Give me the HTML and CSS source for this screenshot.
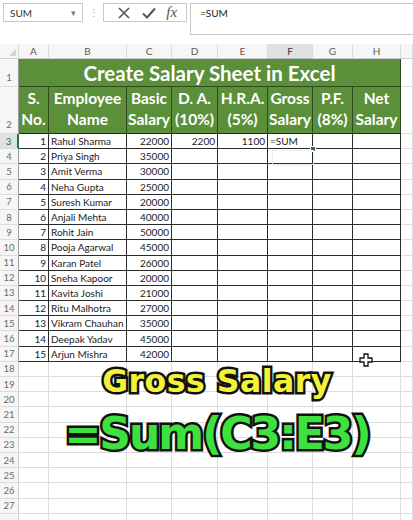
FILE: index.html
```html
<!DOCTYPE html>
<html>
<head>
<meta charset="utf-8">
<link rel="stylesheet" href="styles.css">
</head>
<body>
<div class="fbar">
  <div class="namebox"><span>SUM</span><span class="arrow">▾</span></div>
  <div class="dots">⋮</div>
  <div class="fxbox">
    <svg class="ic" width="14" height="14" viewBox="0 0 14 14"><path d="M2 2 L12 12 M12 2 L2 12" stroke="#555" stroke-width="1.6" fill="none"/></svg>
    <svg class="ic" width="16" height="14" viewBox="0 0 16 14"><path d="M2 7.5 L6 11.5 L14 2.5" stroke="#555" stroke-width="2" fill="none"/></svg>
    <span class="fx">fx</span>
  </div>
  <div class="finput">=SUM</div>
</div>
<div class="sheet">
  <div class="row hd">
    <div class="c corner"><span class="tri"></span></div>
    <div class="c ch">A</div><div class="c ch">B</div><div class="c ch">C</div><div class="c ch">D</div><div class="c ch">E</div><div class="c ch sel">F</div><div class="c ch">G</div><div class="c ch">H</div><div class="c ch"></div>
  </div>
  <div class="row r1">
    <div class="c rn dk bot">1</div>
    <div class="c title">Create Salary Sheet in Excel</div>
    <div class="c"></div>
  </div>
  <div class="row r2">
    <div class="c rn dk bot">2</div>
    <div class="c h">S.<br>No.</div><div class="c h">Employee<br>Name</div><div class="c h">Basic<br>Salary</div><div class="c h">D. A.<br>(10%)</div><div class="c h">H.R.A.<br>(5%)</div><div class="c h">Gross<br>Salary</div><div class="c h">P.F.<br>(8%)</div><div class="c h">Net<br>Salary</div>
    <div class="c"></div>
  </div>
  <div class="row d"><div class="c rn dk cur">3</div><div class="c b n">1</div><div class="c b">Rahul Sharma</div><div class="c b n">22000</div><div class="c b n">2200</div><div class="c b n">1100</div><div class="c b">=SUM</div><div class="c b"></div><div class="c b"></div><div class="c"></div></div>
  <div class="row d"><div class="c rn dk">4</div><div class="c b n">2</div><div class="c b">Priya Singh</div><div class="c b n">35000</div><div class="c b"></div><div class="c b"></div><div class="c b"></div><div class="c b"></div><div class="c b"></div><div class="c"></div></div>
  <div class="row d"><div class="c rn dk">5</div><div class="c b n">3</div><div class="c b">Amit Verma</div><div class="c b n">30000</div><div class="c b"></div><div class="c b"></div><div class="c b"></div><div class="c b"></div><div class="c b"></div><div class="c"></div></div>
  <div class="row d"><div class="c rn dk">6</div><div class="c b n">4</div><div class="c b">Neha Gupta</div><div class="c b n">25000</div><div class="c b"></div><div class="c b"></div><div class="c b"></div><div class="c b"></div><div class="c b"></div><div class="c"></div></div>
  <div class="row d"><div class="c rn dk">7</div><div class="c b n">5</div><div class="c b">Suresh Kumar</div><div class="c b n">20000</div><div class="c b"></div><div class="c b"></div><div class="c b"></div><div class="c b"></div><div class="c b"></div><div class="c"></div></div>
  <div class="row d"><div class="c rn dk">8</div><div class="c b n">6</div><div class="c b">Anjali Mehta</div><div class="c b n">40000</div><div class="c b"></div><div class="c b"></div><div class="c b"></div><div class="c b"></div><div class="c b"></div><div class="c"></div></div>
  <div class="row d"><div class="c rn dk">9</div><div class="c b n">7</div><div class="c b">Rohit Jain</div><div class="c b n">50000</div><div class="c b"></div><div class="c b"></div><div class="c b"></div><div class="c b"></div><div class="c b"></div><div class="c"></div></div>
  <div class="row d"><div class="c rn dk">10</div><div class="c b n">8</div><div class="c b">Pooja Agarwal</div><div class="c b n">45000</div><div class="c b"></div><div class="c b"></div><div class="c b"></div><div class="c b"></div><div class="c b"></div><div class="c"></div></div>
  <div class="row d"><div class="c rn dk">11</div><div class="c b n">9</div><div class="c b">Karan Patel</div><div class="c b n">26000</div><div class="c b"></div><div class="c b"></div><div class="c b"></div><div class="c b"></div><div class="c b"></div><div class="c"></div></div>
  <div class="row d"><div class="c rn dk">12</div><div class="c b n">10</div><div class="c b">Sneha Kapoor</div><div class="c b n">20000</div><div class="c b"></div><div class="c b"></div><div class="c b"></div><div class="c b"></div><div class="c b"></div><div class="c"></div></div>
  <div class="row d"><div class="c rn dk">13</div><div class="c b n">11</div><div class="c b">Kavita Joshi</div><div class="c b n">21000</div><div class="c b"></div><div class="c b"></div><div class="c b"></div><div class="c b"></div><div class="c b"></div><div class="c"></div></div>
  <div class="row d"><div class="c rn dk">14</div><div class="c b n">12</div><div class="c b">Ritu Malhotra</div><div class="c b n">27000</div><div class="c b"></div><div class="c b"></div><div class="c b"></div><div class="c b"></div><div class="c b"></div><div class="c"></div></div>
  <div class="row d"><div class="c rn dk">15</div><div class="c b n">13</div><div class="c b">Vikram Chauhan</div><div class="c b n">35000</div><div class="c b"></div><div class="c b"></div><div class="c b"></div><div class="c b"></div><div class="c b"></div><div class="c"></div></div>
  <div class="row d"><div class="c rn dk">16</div><div class="c b n">14</div><div class="c b">Deepak Yadav</div><div class="c b n">45000</div><div class="c b"></div><div class="c b"></div><div class="c b"></div><div class="c b"></div><div class="c b"></div><div class="c"></div></div>
  <div class="row d"><div class="c rn dk">17</div><div class="c b n">15</div><div class="c b">Arjun Mishra</div><div class="c b n">42000</div><div class="c b"></div><div class="c b"></div><div class="c b"></div><div class="c b"></div><div class="c b"></div><div class="c"></div></div>
  <div class="row d"><div class="c rn">18</div><div class="c"></div><div class="c"></div><div class="c"></div><div class="c"></div><div class="c"></div><div class="c"></div><div class="c"></div><div class="c"></div><div class="c"></div></div>
  <div class="row d"><div class="c rn">19</div><div class="c"></div><div class="c"></div><div class="c"></div><div class="c"></div><div class="c"></div><div class="c"></div><div class="c"></div><div class="c"></div><div class="c"></div></div>
  <div class="row d"><div class="c rn">20</div><div class="c"></div><div class="c"></div><div class="c"></div><div class="c"></div><div class="c"></div><div class="c"></div><div class="c"></div><div class="c"></div><div class="c"></div></div>
  <div class="row d"><div class="c rn">21</div><div class="c"></div><div class="c"></div><div class="c"></div><div class="c"></div><div class="c"></div><div class="c"></div><div class="c"></div><div class="c"></div><div class="c"></div></div>
  <div class="row d"><div class="c rn">22</div><div class="c"></div><div class="c"></div><div class="c"></div><div class="c"></div><div class="c"></div><div class="c"></div><div class="c"></div><div class="c"></div><div class="c"></div></div>
  <div class="row d"><div class="c rn">23</div><div class="c"></div><div class="c"></div><div class="c"></div><div class="c"></div><div class="c"></div><div class="c"></div><div class="c"></div><div class="c"></div><div class="c"></div></div>
  <div class="row d"><div class="c rn">24</div><div class="c"></div><div class="c"></div><div class="c"></div><div class="c"></div><div class="c"></div><div class="c"></div><div class="c"></div><div class="c"></div><div class="c"></div></div>
  <div class="row d"><div class="c rn">25</div><div class="c"></div><div class="c"></div><div class="c"></div><div class="c"></div><div class="c"></div><div class="c"></div><div class="c"></div><div class="c"></div><div class="c"></div></div>
  <div class="row d"><div class="c rn">26</div><div class="c"></div><div class="c"></div><div class="c"></div><div class="c"></div><div class="c"></div><div class="c"></div><div class="c"></div><div class="c"></div><div class="c"></div></div>
  <div class="row d"><div class="c rn">27</div><div class="c"></div><div class="c"></div><div class="c"></div><div class="c"></div><div class="c"></div><div class="c"></div><div class="c"></div><div class="c"></div><div class="c"></div></div>
  <div class="row d"><div class="c rn"></div><div class="c"></div><div class="c"></div><div class="c"></div><div class="c"></div><div class="c"></div><div class="c"></div><div class="c"></div><div class="c"></div><div class="c"></div></div>
</div>
<div class="handle"></div>
<div class="autobox"></div>
<svg class="cursor" width="14" height="14" viewBox="0 0 14 14"><path d="M5 1 H9 V5 H13 V9 H9 V13 H5 V9 H1 V5 H5 Z" fill="#fff" stroke="#111" stroke-width="1.3"/></svg>
<div class="cap cap1">Gross Salary</div>
<div class="cap cap2">=Sum(C3:E3)</div>
</body>
</html>
```
FILE: styles.css
```css
html, body { margin: 0; padding: 0; background: #fff; }
body { position: relative; width: 413px; height: 520px; overflow: hidden; font-family: "Lato", "Open Sans", sans-serif; }

.fbar { display: flex; align-items: flex-start; height: 44px; padding: 3px 0 0 3px; box-sizing: border-box; }
.namebox { width: 80px; height: 19px; box-sizing: border-box; border: 1px solid #c8c8c8; display: flex; align-items: center; justify-content: space-between; padding: 0 6px 0 6px; font-size: 10px; color: #333; }
.arrow { font-size: 9px; color: #777; }
.dots { width: 20px; text-align: center; color: #b0b0b0; font-size: 11px; line-height: 19px; }
.fxbox { width: 84px; height: 19px; box-sizing: border-box; border: 1px solid #c8c8c8; display: flex; align-items: center; justify-content: space-around; padding: 0 4px 0 8px; }
.ic { display: block; }
.fx { font-family: "Liberation Serif", serif; font-style: italic; font-size: 15px; color: #555; line-height: 17px; }
.finput { flex: 1; height: 32px; margin-left: 3px; box-sizing: border-box; border: 1px solid #c8c8c8; border-right: none; padding: 3px 9px; font-size: 10px; color: #222; }

.row { display: grid; grid-template-columns: 19px 30px 78px 45px 46px 50px 45px 40px 48px 12px; }
.hd { height: 15px; }
.r1 { height: 28px; }
.r2 { height: 47px; }
.d { height: 15.2px; }

.c { box-sizing: border-box; border-right: 1px solid #dcdcdc; border-bottom: 1px solid #dcdcdc; overflow: hidden; white-space: nowrap; font-size: 10px; color: #222; display: flex; align-items: center; padding: 0 2px; }
.ch { background: #f6f6f6; justify-content: center; color: #5a5a5a; border-bottom-color: #cfcfcf; }
.ch.sel { background: #e1e1e1; color: #333; border-bottom: 1px solid #b8b8b8; }
.corner { background: #f6f6f6; border-bottom-color: #cfcfcf; position: relative; }
.tri { position: absolute; right: 2px; bottom: 2px; width: 0; height: 0; border-left: 7px solid transparent; border-bottom: 7px solid #d3d3d3; }

.rn { background: #f6f6f6; justify-content: center; color: #6a6a6a; font-size: 9.5px; border-right-color: #cfcfcf; }
.rn.bot { align-items: flex-end; padding-bottom: 3px; }
.rn.dk { border-right-color: #9a9a9a; }
.rn.cur { background: #e1e1e1; color: #217346; border-right: 2px solid #217346; }

.title { grid-column: span 8; background: #5b8f3a; color: #fff; font-weight: 700; font-size: 20.5px; justify-content: center; border-right: 1px solid #2f4a20; border-bottom: 1px solid #2f4a20; padding-top: 1px; }
.h { background: #5b8f3a; color: #fff; font-weight: 700; font-size: 15.5px; line-height: 21px; text-align: center; justify-content: center; align-items: flex-end; padding: 0 0 3px 0; border-right: 1px solid #2f4a20; border-bottom: 1px solid #1f2f16; }

.b { border-right: 1px solid #2b2b2b; border-bottom: 1px solid #2b2b2b; }
.n { justify-content: flex-end; }

.handle { position: absolute; left: 310px; top: 146px; width: 4px; height: 4px; background: #217346; border: 1px solid #fff; }
.autobox { position: absolute; left: 272px; top: 150px; width: 42px; height: 15px; box-shadow: 0 1px 2px rgba(0,0,0,0.06); border: 1px solid #efefef; box-sizing: border-box; }
.cursor { position: absolute; left: 359px; top: 353px; }

.cap { position: absolute; left: 217px; transform: translateX(-50%); white-space: nowrap; font-family: "DejaVu Sans", sans-serif; font-weight: 700; line-height: 1; -webkit-text-stroke: 5px #111; paint-order: stroke fill; }
.cap1 { top: 366px; font-size: 31.5px; color: #f2f23a; letter-spacing: 0.5px; }
.cap2 { top: 412px; font-size: 44px; color: #3ee23e; letter-spacing: -2px; }
```
